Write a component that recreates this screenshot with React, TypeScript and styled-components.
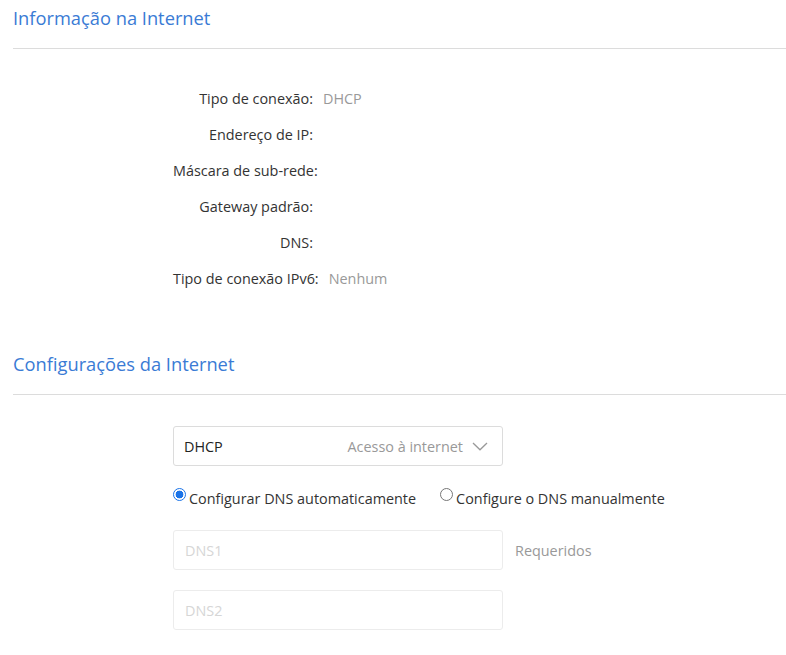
import React from "react";
import styled, { createGlobalStyle } from "styled-components";

const Global = createGlobalStyle`
  html, body { margin: 0; padding: 0; background: #fff; }
  body { font-family: "Open Sans", "Noto Sans", sans-serif; font-size: 14.4px; color: #333; }
  * { box-sizing: border-box; }
`;

const Page = styled.div`
  padding-left: 13px;
  width: 786px;
`;

const Title = styled.h2<{ $top?: number }>`
  margin: ${(p) => p.$top ?? 0}px 0 0 0;
  font-size: 18.3px;
  font-weight: 400;
  line-height: 36px;
  color: #3a7bd5;
  padding-bottom: 12px;
  border-bottom: 1px solid #dcdcdc;
`;

const InfoList = styled.div`
  margin-top: 31px;
  padding-left: 160px;
  display: flex;
  flex-direction: column;
`;

const InfoRow = styled.div`
  height: 36px;
  display: flex;
  align-items: center;
`;

const Label = styled.span`
  min-width: 140px;
  text-align: right;
  white-space: nowrap;
  color: #333;
  margin-right: 10px;
`;

const Value = styled.span`
  color: #999;
`;

const Form = styled.div`
  margin-top: 31px;
  padding-left: 160px;
  display: flex;
  flex-direction: column;
`;

const Select = styled.div`
  width: 330px;
  height: 40px;
  border: 1px solid #dcdcdc;
  border-radius: 3px;
  display: flex;
  align-items: center;
  padding: 0 14px 0 10px;
`;

const SelectValue = styled.span`
  color: #222;
  flex: 1;
`;

const SelectHint = styled.span`
  color: #999;
  margin-right: 9px;
`;

const RadioRow = styled.div`
  display: flex;
  align-items: center;
  height: 24px;
  margin-top: 20px;
  gap: 24px;
`;

const RadioLabel = styled.label`
  display: flex;
  align-items: center;
  gap: 3px;
  color: #333;
`;

const RadioDot = styled.span<{ $checked?: boolean }>`
  width: 13px;
  height: 13px;
  border-radius: 50%;
  border: 1px solid ${(p) => (p.$checked ? "#1a73e8" : "#767676")};
  background: ${(p) => (p.$checked ? "radial-gradient(circle, #1a73e8 0 3.6px, #fff 4.2px)" : "#fff")};
  transform: translateY(-4px);
  flex-shrink: 0;
`;

const FieldGroup = styled.div`
  margin-top: 20px;
  display: flex;
  flex-direction: column;
  gap: 20px;
`;

const FieldRow = styled.div`
  display: flex;
  align-items: center;
`;

const Input = styled.div`
  width: 330px;
  height: 40px;
  border: 1px solid #ececec;
  border-radius: 3px;
  display: flex;
  align-items: center;
  padding-left: 11px;
  color: #d6d6d6;
`;

const Required = styled.span`
  margin-left: 12px;
  color: #999;
`;

const Chevron = () => (
  <svg width="16" height="9" viewBox="0 0 16 9" fill="none">
    <path d="M1 1 L8 7.8 L15 1" stroke="#999" strokeWidth="1.3" />
  </svg>
);

export default function App() {
  const rows: [string, string][] = [
    ["Tipo de conexão:", "DHCP"],
    ["Endereço de IP:", ""],
    ["Máscara de sub-rede:", ""],
    ["Gateway padrão:", ""],
    ["DNS:", ""],
    ["Tipo de conexão IPv6:", "Nenhum"],
  ];
  return (
    <Page>
      <Global />
      <Title>Informação na Internet</Title>
      <InfoList>
        {rows.map(([l, v]) => (
          <InfoRow key={l}>
            <Label>{l}</Label>
            <Value>{v}</Value>
          </InfoRow>
        ))}
      </InfoList>
      <Title $top={50}>Configurações da Internet</Title>
      <Form>
        <Select>
          <SelectValue>DHCP</SelectValue>
          <SelectHint>Acesso à internet</SelectHint>
          <Chevron />
        </Select>
        <RadioRow>
          <RadioLabel>
            <RadioDot $checked />
            Configurar DNS automaticamente
          </RadioLabel>
          <RadioLabel>
            <RadioDot />
            Configure o DNS manualmente
          </RadioLabel>
        </RadioRow>
        <FieldGroup>
          <FieldRow>
            <Input>DNS1</Input>
            <Required>Requeridos</Required>
          </FieldRow>
          <FieldRow>
            <Input>DNS2</Input>
          </FieldRow>
        </FieldGroup>
      </Form>
    </Page>
  );
}
